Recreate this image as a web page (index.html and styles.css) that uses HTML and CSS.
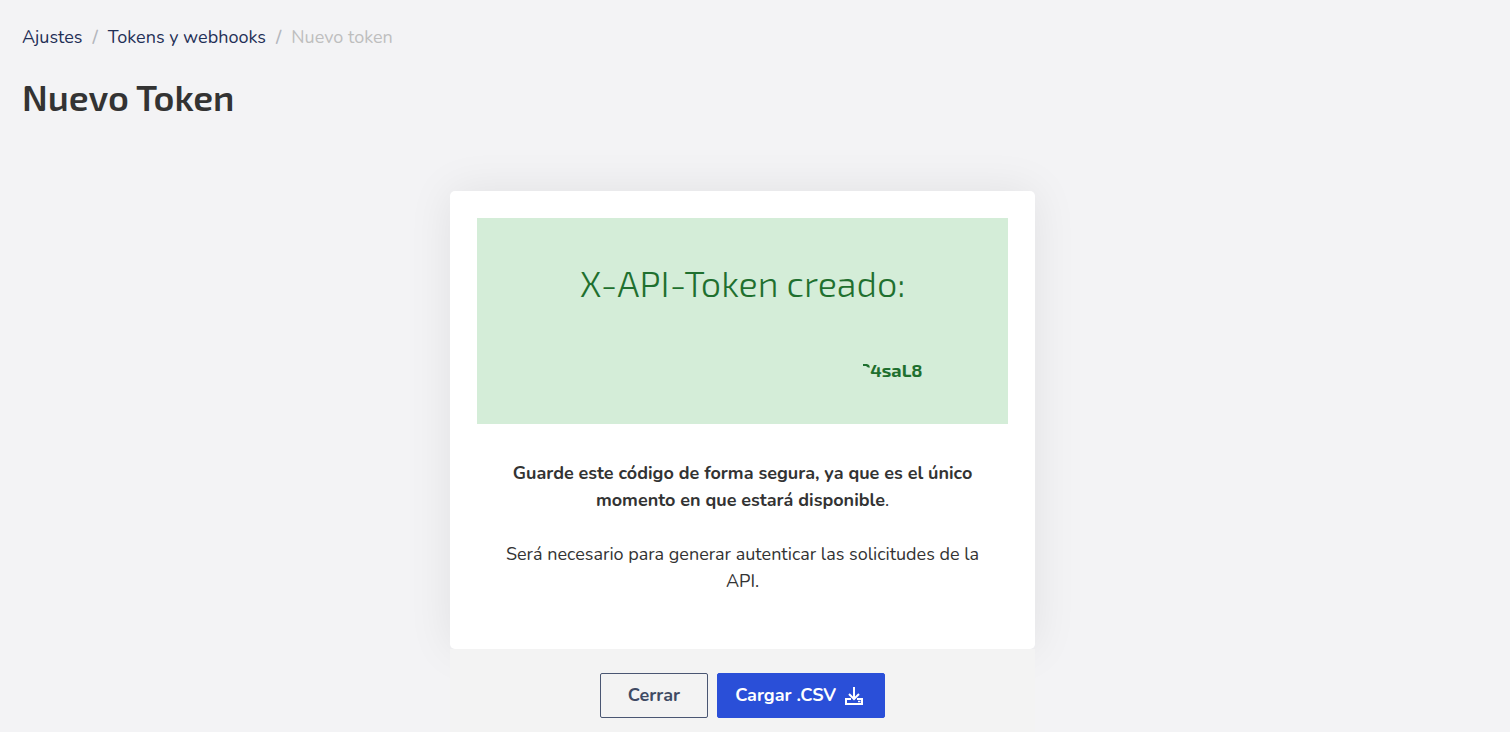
FILE: index.html
```html
<!DOCTYPE html>
<html lang="es">
<head>
<meta charset="utf-8">
<meta name="viewport" content="width=device-width, initial-scale=1">
<title>Nuevo Token</title>
<link rel="stylesheet" href="styles.css">
</head>
<body>
	<header class="page-header">
		<nav class="breadcrumb" aria-label="Ruta">
			<a href="#ajustes">Ajustes</a>
			<span class="separator">/</span>
			<a href="#tokens">Tokens y webhooks</a>
			<span class="separator">/</span>
			<span class="current">Nuevo token</span>
		</nav>
		<h1>Nuevo Token</h1>
	</header>
	<main class="token-panel">
		<section class="card">
			<div class="token-box">
				<h2>X-API-Token creado:</h2>
				<p class="token"><svg class="token-mask" width="8" height="14" viewBox="0 0 8 14" aria-hidden="true"><path d="M1 1h4l2 1 1 2.500H6L4 3H1z" fill="currentColor"/></svg>4saL8</p>
			</div>
			<div class="message">
				<p><strong>Guarde este código de forma segura, ya que es el único momento en que estará disponible</strong>.</p>
				<p>Será necesario para generar autenticar las solicitudes de la API.</p>
			</div>
		</section>
		<footer class="actions">
			<button type="button" class="btn btn-outline">Cerrar</button>
			<button type="button" class="btn btn-primary">Cargar .CSV
				<svg width="18" height="18" viewBox="0 0 18 18" fill="none" stroke="currentColor" stroke-width="2" aria-hidden="true">
					<path d="M9 0v12M4 7l5 5 5-5"/>
					<path d="M6 12H1v5h16v-5h-5"/>
					<path d="M13 14.500h2.500" stroke-width="1.500"/>
				</svg>
			</button>
		</footer>
	</main>
</body>
</html>
```

FILE: styles.css
```css
* {
	box-sizing: border-box;
}

body {
	margin: 0;
	color: #333;
	background: #f3f3f5;
	font: 18px/27px Nunito, "Open Sans", sans-serif;
}

h1, h2, p {
	margin: 0;
}

.page-header {
	padding: 24px 22px 0;
}

.breadcrumb {
	display: flex;
	flex-wrap: wrap;
	gap: 10px;
}
.breadcrumb a {
	color: #1f2f56;
	text-decoration: none;
}
.breadcrumb a:hover {text-decoration: underline;}
.separator {
	color: #b4b7bd;
	font-weight: 600;
}
.current {color: #bebebe;}

h1 {
	margin-top: 24px;
	font: 600 36px/44px "Exo 2", "Open Sans", sans-serif;
}

.token-panel {
	padding: 72px 25px 0 0;
}

.card {
	position: relative;
	max-width: 585px;
	margin: 0 auto;
	padding: 27px 27px 54px;
	border-radius: 5px;
	background: #fff;
	box-shadow: 0 0 45px rgba(0, 0, 0, 0.08);
}

.token-box {
	padding: 43px 24px 40px;
	color: #1f702f;
	background: #d4edd8;
	text-align: center;
}
.token-box h2 {
	font: 300 36px/44px "Exo 2", "Open Sans", sans-serif;
}
.token {
	max-width: 360px;
	margin: 52px auto 0;
	font: 700 18px/27px "Exo 2", "Open Sans", sans-serif;
	text-align: right;
}

.message {
	display: flex;
	flex-direction: column;
	gap: 27px;
	padding: 36px 27px 0;
	text-align: center;
}
.message strong {font-weight: 700;}

.actions {
	position: relative;
	display: flex;
	justify-content: center;
	gap: 9px;
	max-width: 585px;
	margin: 0 auto;
	padding: 24px 27px 14px;
	background: #f3f3f3;
}

.btn {
	display: flex;
	align-items: center;
	justify-content: center;
	gap: 9px;
	height: 45px;
	padding: 0 27px;
	border: 1px solid #4a5672;
	border-radius: 2px;
	font: 700 18px/27px Nunito, "Open Sans", sans-serif;
	cursor: pointer;
}
.btn-outline {
	color: #3f4a63;
	background: transparent;
}
.btn-primary {
	padding: 0 21px 0 17px;
	border-color: #2a4fd8;
	color: #fff;
	background: #2a4fd8;
}
```
